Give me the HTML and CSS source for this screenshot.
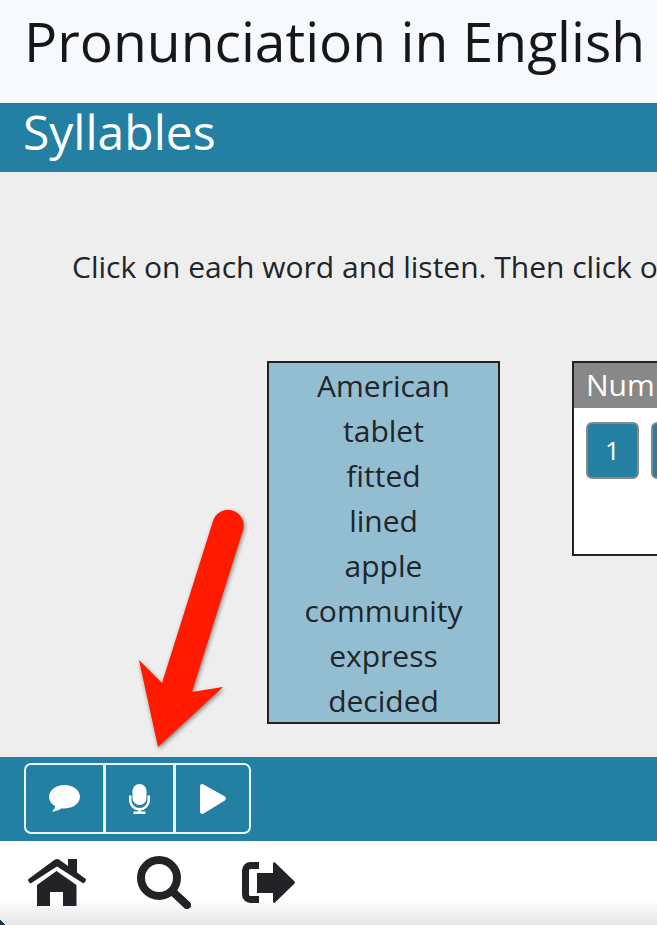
FILE: index.html
```html
<!DOCTYPE html>
<html lang="en">
<head>
    <meta charset="UTF-8">
    <title>Pronunciation in English</title>
    <link rel="stylesheet" href="styles.css">
</head>
<body>
    <div class="page">
        <header class="page-header">
            <h1>Pronunciation in English</h1>
        </header>
        <div class="title-bar">Syllables</div>

        <main class="content">
            <p class="instructions">Click on each word and listen. Then click on the number of syllables.</p>
            <div class="exercise">
                <div class="word-list">
                    <div class="word">American</div>
                    <div class="word">tablet</div>
                    <div class="word">fitted</div>
                    <div class="word">lined</div>
                    <div class="word">apple</div>
                    <div class="word">community</div>
                    <div class="word">express</div>
                    <div class="word">decided</div>
                </div>
                <div class="number-box">
                    <div class="number-title">Number of syllables</div>
                    <div class="number-buttons">
                        <div class="number-btn">1</div>
                        <div class="number-btn">2</div>
                        <div class="number-btn">3</div>
                    </div>
                </div>
            </div>
        </main>

        <div class="toolbar">
            <div class="btn-group">
                <div class="tool-btn tool-btn-wide">
                    <svg class="icon-comment" viewBox="0 0 31 27"><path d="M15.500 0C6.900 0 0 5.200 0 11.800c0 3.900 2.400 7.200 6.200 9.300-.3 2-1.400 4-3.200 5.600 3.600-.2 7.400-1.700 9.700-3.500 1 .1 1.900.2 2.800.2 8.600 0 15.500-5.100 15.500-11.600S24.100 0 15.500 0z"/></svg>
                </div>
                <div class="tool-btn">
                    <svg class="icon-mic" viewBox="0 0 21 30"><rect x="3.500" y="0" width="14" height="21" rx="7"/><path class="mic-stand" d="M1.200 11.500v4.500a9.300 9.300 0 0 0 18.600 0v-4.500M10.500 25.500V29M4.500 28.800h12"/></svg>
                </div>
                <div class="tool-btn">
                    <svg class="icon-play" viewBox="0 0 26 30"><path d="M0 2.500C0 .5 1.800-.6 3.500.4l21 11.800c1.800 1 1.800 3.500 0 4.500L3.500 29.600C1.800 30.600 0 29.500 0 27.500z"/></svg>
                </div>
            </div>
        </div>

        <nav class="bottom-nav">
            <svg class="icon-home" viewBox="0 0 60 47"><path d="M29 .6c1.200-.8 2.800-.8 4 0l9 6.400V0h9v13.500l8.500 6.300c.6.500.7 1.200.3 1.800l-1.300 2c-.5.6-1.200.7-1.800.3L31 7.500 5.300 24c-.6.400-1.300.3-1.800-.3l-1.300-2c-.4-.6-.3-1.300.3-1.800z"/><path d="M30.500 12 50.500 26v21H37V33H24v14H11V26z"/></svg>
            <svg class="icon-search" viewBox="0 0 54 53"><circle cx="22" cy="22" r="18"/><path d="M36 36 50 49"/></svg>
            <svg class="icon-exit" viewBox="0 0 53 41"><path class="exit-bracket" d="M17 3.500H8.500a5 5 0 0 0-5 5v24a5 5 0 0 0 5 5H17"/><path d="M31 1.500c0-1.200 1.100-1.700 2-.9l19.300 18.700c.7.700.7 1.700 0 2.400L33 40.400c-.9.800-2 .3-2-.9V31H15V11h16z"/></svg>
        </nav>

        <svg class="arrow" viewBox="0 -6 120 246">
            <path d="M4 148 27 171 78 9A15.500 15.500 0 0 1 108 18L57 180 88 175 23 235z"/>
        </svg>
    </div>
</body>
</html>
```

FILE: styles.css
```css
* {
    box-sizing: border-box;
}
html, body {
    margin: 0;
    padding: 0;
}
body {
    font-family: "Open Sans", "Noto Sans", sans-serif;
    color: #212529;
}
.page {
    position: relative;
    display: flex;
    flex-direction: column;
    width: 657px;
    height: 925px;
    overflow: hidden;
}
/* window corner showing at the bottom left */
.page::after {
    content: "";
    position: absolute;
    left: 0;
    bottom: 0;
    width: 6px;
    height: 6px;
    background: linear-gradient(45deg, #1d3345 50%, transparent 50%);
}
.page-header {
    height: 103px;
    padding-left: 24px;
    background: #f8f9fb;
}
.page-header h1 {
    margin: 0;
    font-size: 55.2px;
    font-weight: 400;
    line-height: 82px;
    white-space: nowrap;
    color: #15171a;
}
.title-bar {
    height: 69px;
    padding-left: 23px;
    background: #2480a3;
    color: #fff;
    font-size: 48px;
    line-height: 58px;
}
.content {
    flex: 1;
    min-height: 0;
    background: #eee;
}
.instructions {
    margin: 76px 0 0 72px;
    width: 1100px;
    font-size: 30px;
    line-height: 38px;
}
.exercise {
    display: flex;
    gap: 72px;
    margin: 75px 0 0 267px;
}
.word-list {
    flex: none;
    width: 233px;
    height: 363px;
    border: 2px solid #222;
    background: #93bed1;
    text-align: center;
    font-size: 30px;
}
.word {
    height: 45px;
    line-height: 45px;
}
.number-box {
    flex: none;
    width: 400px;
    height: 195px;
    border: 2px solid #222;
    background: #fff;
}
.number-title {
    height: 45px;
    padding-left: 12px;
    background: #888;
    color: #fff;
    font-size: 30px;
    line-height: 43px;
    white-space: nowrap;
}
.number-buttons {
    display: flex;
    gap: 12px;
    padding: 14px 12px;
}
.number-btn {
    width: 53px;
    height: 57px;
    border: 2px solid #888;
    border-radius: 6px;
    background: #2480a3;
    color: #fff;
    text-align: center;
    font-size: 26px;
    line-height: 53px;
}
.toolbar {
    height: 84px;
    padding: 6px 24px;
    background: #2480a3;
}
.btn-group {
    display: flex;
    width: 227px;
    height: 71px;
    border: 2px solid #e8f6fb;
    border-radius: 7px;
}
.tool-btn {
    display: flex;
    align-items: center;
    justify-content: center;
    width: 70px;
    border-left: 3px solid #e8f6fb;
}
.tool-btn-wide {
    width: 77px;
    border-left: 0;
}
.tool-btn:last-child {
    width: 76px;
}
.tool-btn svg {
    fill: #fff;
}
.icon-comment {
    width: 31px;
    height: 27px;
}
.icon-mic {
    width: 21px;
    height: 30px;
}
.mic-stand {
    fill: none;
    stroke: #fff;
    stroke-width: 2.500;
}
.icon-play {
    width: 26px;
    height: 30px;
}
.bottom-nav {
    display: flex;
    align-items: center;
    height: 84px;
    padding: 0 0 1px 26px;
    background: linear-gradient(#fff 68%, #e6e6e6);
}
.bottom-nav svg {
    fill: #212327;
    flex: none;
}
.icon-home {
    width: 60px;
    height: 47px;
}
.icon-search {
    width: 54px;
    height: 53px;
    margin-left: 51px;
}
.icon-search circle, .icon-search path {
    fill: none;
    stroke: #212327;
    stroke-width: 8px;
}
.icon-search path {
    stroke-linecap: round;
}
.icon-exit {
    width: 53px;
    height: 41px;
    margin-left: 51px;
}
.bottom-nav .exit-bracket {
    fill: none;
    stroke: #212327;
    stroke-width: 7px;
}
.arrow {
    position: absolute;
    left: 135px;
    top: 506px;
    width: 120px;
    height: 246px;
    fill: #ff1a00;
    filter: drop-shadow(1px 2px 2px rgba(0,0,0,0.45));
}
```
